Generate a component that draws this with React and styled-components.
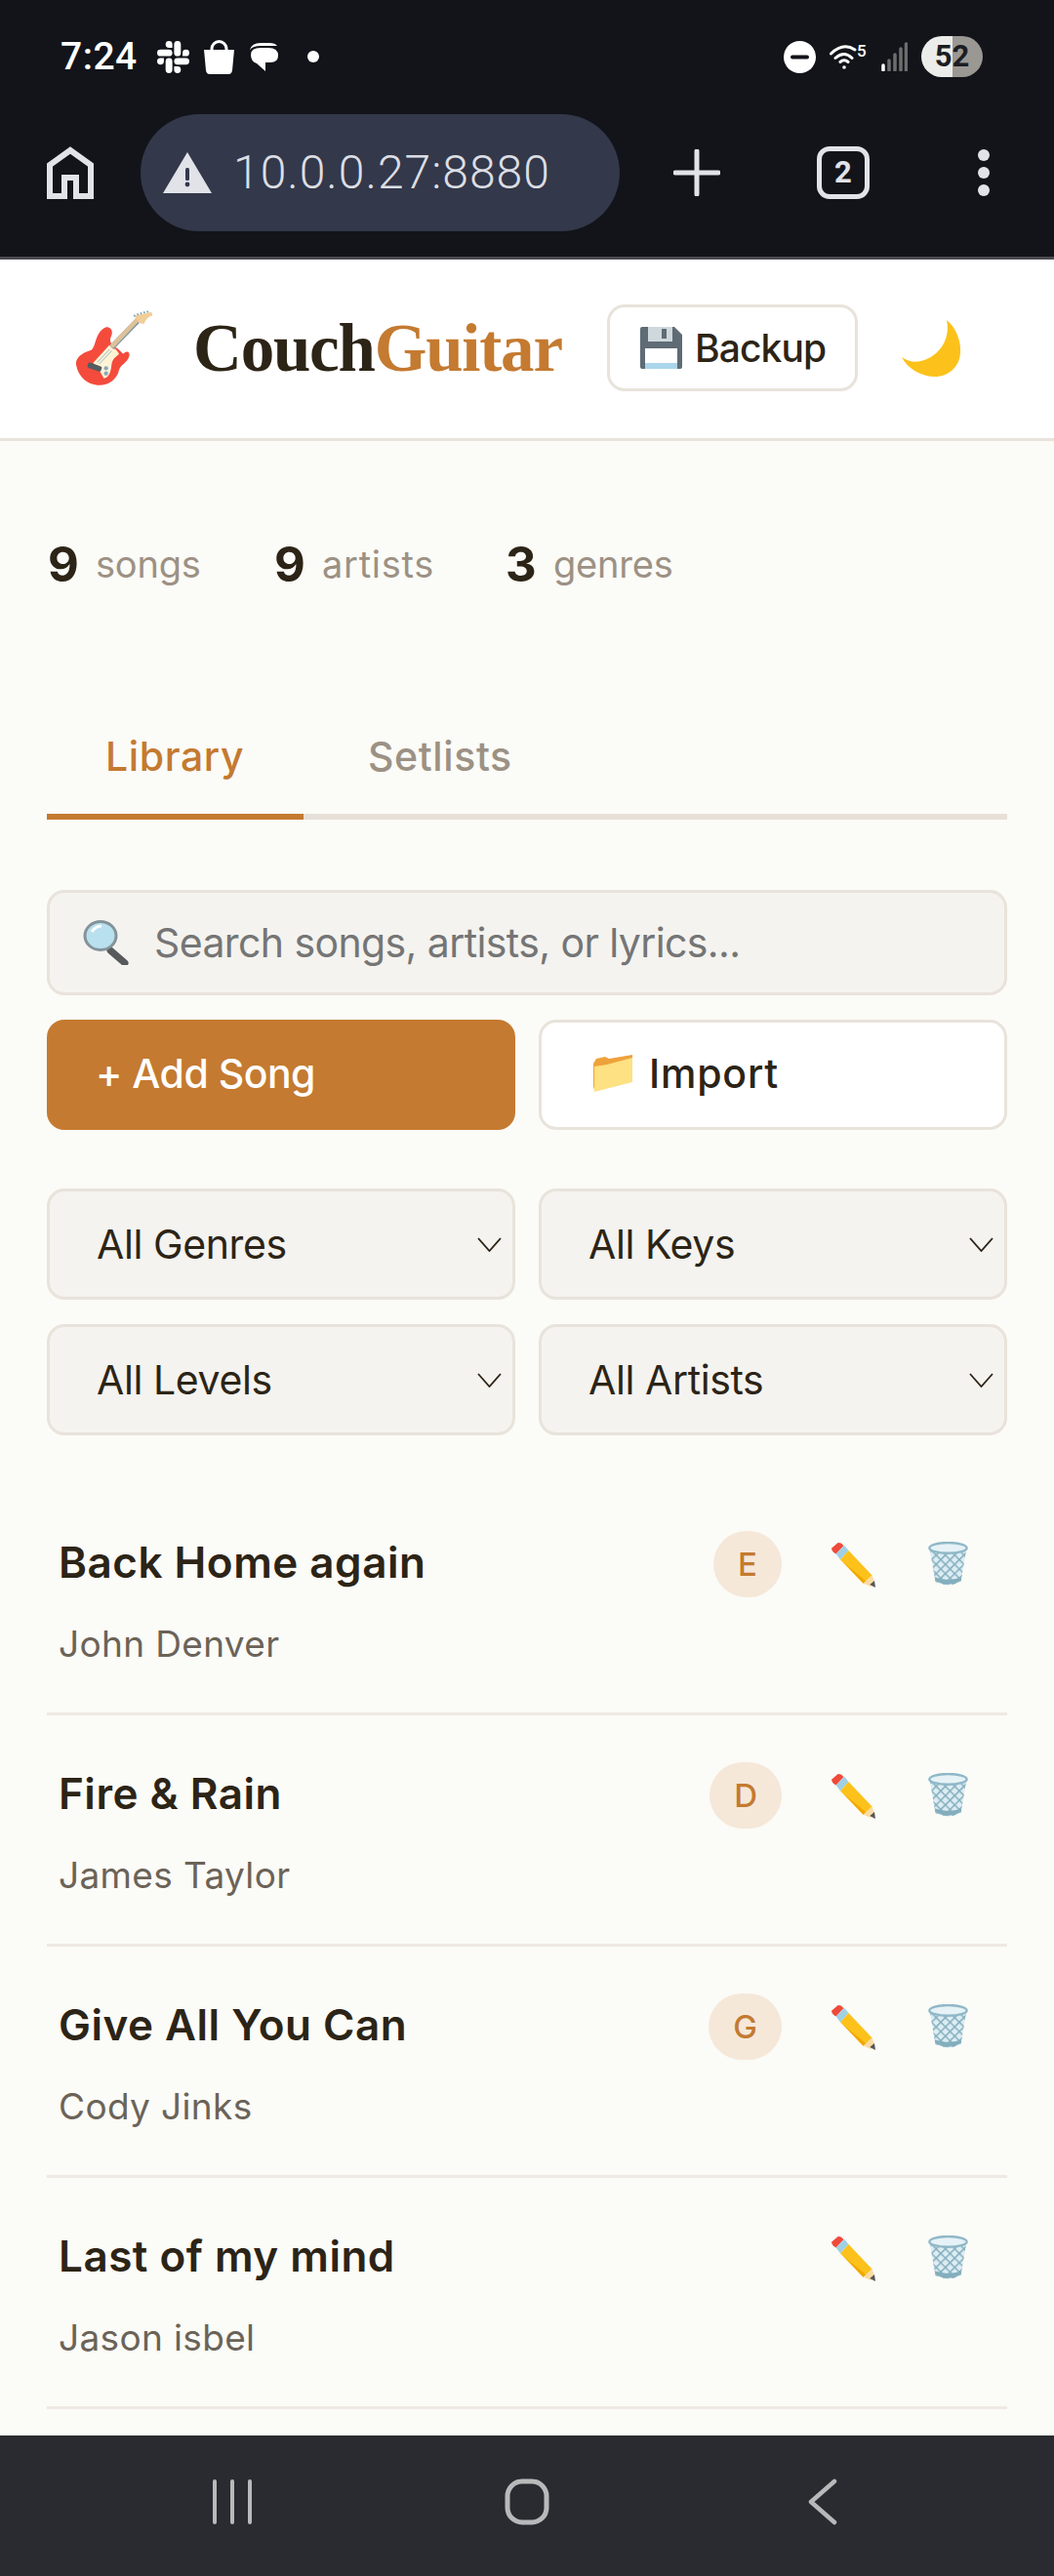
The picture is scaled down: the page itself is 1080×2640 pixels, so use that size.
import React from 'react';
import styled, { createGlobalStyle } from 'styled-components';
import { SiSlack } from 'react-icons/si';

const GlobalStyle = createGlobalStyle`
    * { box-sizing: border-box; }
    html, body { margin: 0; padding: 0; background: #12141a; }
    body { font-family: "Inter", "Liberation Sans", sans-serif; }
`;

const ACCENT = '#c47a30';
const INK = '#2c2416';
const LINE = '#e8e3db';
const MUTED = '#9c9184';

const Frame = styled.div`
    width: 1080px;
    height: 2640px;
    display: flex;
    flex-direction: column;
    overflow: hidden;
    background: #fbfbf7;
`;

/* phone chrome */
const StatusBar = styled.div`
    height: 116px;
    flex: none;
    display: flex;
    align-items: center;
    padding: 0 73px 0 62px;
    background: #12141a;
    color: #fff;
`;

const Clock = styled.span`
    font-family: Roboto, sans-serif;
    font-size: 39px;
    font-weight: 500;
    width: 99px;
    letter-spacing: 0.5px;
`;

const NotifyIcons = styled.div`
    display: flex;
    align-items: center;
    gap: 14px;
`;

const NotifyDot = styled.i`
    width: 12px;
    height: 12px;
    margin-left: 15px;
    border-radius: 50%;
    background: #fff;
`;

const SystemIcons = styled.div`
    margin-left: auto;
    display: flex;
    align-items: center;
    gap: 14px;
`;

const WifiGroup = styled.div`
    display: flex;
    align-items: flex-start;
    height: 28px;
    span {
        width: 11px;
        font-family: Roboto, sans-serif;
        font-size: 17px;
        font-weight: 500;
        line-height: 17px;
    }
`;

const Battery = styled.div`
    width: 63px;
    height: 42px;
    border-radius: 21px;
    background: linear-gradient(90deg, #ececea 0 51%, #9b9893 51% 100%);
    color: #1c1d22;
    font-family: Roboto, sans-serif;
    font-weight: 700;
    font-size: 31px;
    line-height: 42px;
    text-align: center;
`;

const Toolbar = styled.div`
    height: 150px;
    flex: none;
    display: flex;
    align-items: center;
    padding: 0 0 26px 48px;
    background: #12141a;
    border-bottom: 3px solid #4b4b51;
    color: #e1e3e9;
`;

const AddressPill = styled.div`
    width: 491px;
    height: 120px;
    margin-left: 48px;
    padding-left: 23px;
    display: flex;
    align-items: center;
    gap: 22px;
    border-radius: 60px;
    background: #33384a;
`;

const AddressText = styled.span`
    font-family: Roboto, sans-serif;
    font-size: 48px;
    font-weight: 300;
    color: #dcdee4;
    letter-spacing: 1px;
    white-space: nowrap;
`;

const PlusSlot = styled.div`
    margin-left: 55px;
    display: flex;
`;

const TabCount = styled.div`
    width: 54px;
    height: 54px;
    margin-left: 99px;
    border: 5px solid #e1e3e9;
    border-radius: 13px;
    font-family: Roboto, sans-serif;
    font-size: 31px;
    font-weight: 700;
    line-height: 44px;
    text-align: center;
`;

const MenuDots = styled.div`
    margin-left: 111px;
    display: flex;
    flex-direction: column;
    gap: 6px;
    i {
        width: 12px;
        height: 12px;
        border-radius: 50%;
        background: #e1e3e9;
    }
`;

const NavBar = styled.div`
    height: 144px;
    flex: none;
    display: grid;
    grid-template-columns: 218px 40px 259px 46px 265px 30px;
    align-items: center;
    background: #2a2b30;
    padding-bottom: 8px;
    svg:first-child { grid-column: 2; }
    svg:nth-child(2) { grid-column: 4; }
    svg:nth-child(3) { grid-column: 6; }
`;

/* app header */
const Header = styled.header`
    height: 186px;
    flex: none;
    display: flex;
    align-items: center;
    padding: 0 0 2px 77px;
    background: #fff;
    border-bottom: 3px solid ${LINE};
`;

const Logo = styled.h1`
    width: 378px;
    margin: 0 46px 0 41px;
    font-family: "Liberation Serif", serif;
    font-size: 69px;
    font-weight: 700;
    line-height: 80px;
    letter-spacing: -1.2px;
    white-space: nowrap;
    color: ${INK};
    span { color: ${ACCENT}; }
`;

const BackupButton = styled.button`
    width: 257px;
    height: 89px;
    display: flex;
    align-items: center;
    gap: 13px;
    padding: 0 0 0 31px;
    font: 500 39px "Inter", sans-serif;
    letter-spacing: -0.9px;
    color: ${INK};
    background: #fff;
    border: 3px solid ${LINE};
    border-radius: 18px;
`;

const MoonSlot = styled.div`
    margin-left: 45px;
    display: flex;
`;

/* page body */
const Main = styled.main`
    flex: 1;
    min-height: 0;
    padding: 96px 48px 0;
    overflow: hidden;
`;

const Stats = styled.div`
    display: flex;
    height: 60px;
    align-items: center;
`;

const Stat = styled.div`
    display: flex;
    align-items: center;
    width: ${(p) => p.$width}px;
    b {
        width: 50px;
        padding-left: 1px;
        font-size: 49px;
        font-weight: 700;
        color: ${INK};
    }
    span {
        font-size: 38px;
        color: ${MUTED};
        letter-spacing: ${(p) => p.$spacing}px;
    }
`;

const TabBar = styled.div`
    display: flex;
    gap: 6px;
    margin-top: 137px;
    border-bottom: 6px solid #e6e0d8;
`;

const Tab = styled.div`
    margin-bottom: -6px;
    padding: 0 60px 29px;
    width: ${(p) => p.$width}px;
    font-size: 41px;
    font-weight: 500;
    line-height: 60px;
    letter-spacing: 0.6px;
    white-space: nowrap;
    color: ${(p) => (p.$active ? ACCENT : MUTED)};
    border-bottom: 6px solid ${(p) => (p.$active ? ACCENT : 'transparent')};
`;

const SearchBox = styled.label`
    height: 108px;
    margin-top: 72px;
    padding-left: 33px;
    display: flex;
    align-items: center;
    gap: 26px;
    background: #f4f3ef;
    border: 3px solid ${LINE};
    border-radius: 18px;
`;

const SearchInput = styled.input`
    flex: 1;
    min-width: 0;
    border: 0;
    outline: 0;
    padding: 0;
    background: none;
    font: 400 41px "Inter", sans-serif;
    letter-spacing: -0.6px;
    color: ${INK};
    &::placeholder { color: #757575; opacity: 1; }
`;

const ActionRow = styled.div`
    display: grid;
    grid-template-columns: 480px 480px;
    column-gap: 24px;
    margin-top: 25px;
`;

const ActionButton = styled.button`
    height: 113px;
    display: flex;
    align-items: center;
    gap: 17px;
    padding: 0 0 3px ${(p) => (p.$primary ? 50 : 53)}px;
    font: 500 41px "Inter", sans-serif;
    letter-spacing: ${(p) => (p.$primary ? -0.5 : 0.8)}px;
    color: ${(p) => (p.$primary ? '#fff' : INK)};
    background: ${(p) => (p.$primary ? ACCENT : '#fff')};
    border: ${(p) => (p.$primary ? '0' : `3px solid ${LINE}`)};
    border-radius: 18px;
`;

const FilterGrid = styled.div`
    display: grid;
    grid-template-columns: 480px 480px;
    gap: 25px 24px;
    margin-top: 60px;
`;

const FilterSelect = styled.div`
    height: 114px;
    padding: 0 11px 0 48px;
    display: flex;
    align-items: center;
    justify-content: space-between;
    font-size: 41px;
    letter-spacing: -0.4px;
    color: ${INK};
    background: #f4f3ef;
    border: 3px solid ${LINE};
    border-radius: 18px;
`;

const SongList = styled.div`
    margin-top: 50px;
`;

const SongRow = styled.div`
    height: 237px;
    display: flex;
    align-items: flex-start;
    padding: 50px 40px 0 12px;
    border-bottom: 3px solid #eee9e2;
`;

const SongInfo = styled.div`
    flex: 1;
    min-width: 0;
`;

const SongTitle = styled.div`
    font-size: 44px;
    font-weight: 600;
    line-height: 60px;
    letter-spacing: 0.5px;
    color: ${INK};
`;

const SongArtist = styled.div`
    margin-top: 29px;
    font-size: 37px;
    line-height: 50px;
    letter-spacing: 0.35px;
    color: #6b6358;
`;

const RowActions = styled.div`
    height: 60px;
    margin-top: 2px;
    display: flex;
    align-items: center;
`;

const KeyBadge = styled.span`
    height: 68px;
    padding: 0 25px;
    margin-right: 50px;
    border-radius: 34px;
    font-size: 33px;
    font-weight: 500;
    line-height: 68px;
    color: ${ACCENT};
    background: #f5e8d9;
`;

const Spacer = styled.span`
    width: 53px;
`;

/* drawings */
const HomeIcon = () => (
    <svg width="48" height="54" viewBox="0 0 48 54" fill="none" stroke="#e1e3e9" strokeWidth="6">
        <path d="M3 51V19L24 4l21 15v32H30V32H18v19z" />
    </svg>
);

const WarnIcon = () => (
    <svg width="50" height="42" viewBox="0 0 50 42">
        <path d="M25 0l25 42H0z" fill="#e1e3e9" />
        <rect x="23" y="16" width="4" height="13" rx="1.5" fill="#33384a" />
        <circle cx="25" cy="33" r="2.4" fill="#33384a" />
    </svg>
);

const PlusIcon = () => (
    <svg width="48" height="48" viewBox="0 0 48 48" stroke="#e1e3e9" strokeWidth="5" strokeLinecap="round">
        <path d="M24 2v44M2 24h44" />
    </svg>
);

const BagIcon = () => (
    <svg width="33" height="35" viewBox="0 0 33 35">
        <path d="M9 11V9a7.5 7.5 0 0 1 15 0v2" fill="none" stroke="#fff" strokeWidth="3" />
        <path d="M1 10h31l-2 21q-.4 4-4 4H7q-3.600 0-4-4z" fill="#fff" />
    </svg>
);

const ChatIcon = () => (
    <svg width="31" height="31" viewBox="0 0 31 31">
        <path d="M1 8Q3 1 12 1h9q6 0 8 3H12Q4 4 1 8z" fill="#fff" />
        <path d="M2 13q0-7 10-7h8q10 0 10 8 0 7-8 7h-5v9l-9-8Q2 20 2 13z" fill="#fff" />
    </svg>
);

const DndIcon = () => (
    <svg width="33" height="33" viewBox="0 0 33 33">
        <circle cx="16.500" cy="16.500" r="16.500" fill="#fff" />
        <rect x="7" y="14.500" width="19" height="4" rx="2" fill="#12141a" />
    </svg>
);

const WifiIcon = () => (
    <svg width="28" height="28" viewBox="0 0 28 28" fill="none" stroke="#fff" strokeWidth="3" strokeLinecap="round">
        <path d="M1.500 11Q14-1 26 7M6 15.500q9-8 17 0M11 19.500q4-3.500 8 0" />
        <circle cx="15" cy="25" r="1.800" fill="#fff" stroke="none" />
    </svg>
);

const SignalIcon = () => (
    <svg width="27" height="30" viewBox="0 0 27 30" strokeWidth="3.500" strokeLinecap="round" fill="none">
        <path d="M2 29v-5" stroke="#fff" />
        <path d="M8 29V19M14 29V13M20 29V7M25.500 29V2" stroke="#6d6d6d" />
    </svg>
);

const GuitarEmoji = () => (
    <svg width="80" height="80" viewBox="110 75 240 240">
        <path d="M205 130c17-2 23 15 15 30-6 12 2 30 20 35l18 17c10-12 22-7 18 8-6 20-26 25-31 42-7 33-40 50-67 46-28-3-58-23-65-63-3-20 17-37 47-45 15-10 10-55 45-70z" fill="#f44b3c" />
        <path d="M165 240l50-55c10 5 25 15 30 27-10 10-20 13-23 33-2 20-7 40-24 42-8-17-23-37-33-47z" fill="#fff3d6" />
        <path d="M222 192l90-92" stroke="#78909c" strokeWidth="17" />
        <path d="M222 190l88-92" stroke="#dcc29a" strokeWidth="14" />
        <path d="M292 95l53-12 3 11c-13 5-20 10-26 26l-16-3z" fill="#f1cd98" />
        <path d="M291 92l3 5M301 88l3 5M311 85l3 5M321 82l3 5M331 80l3 5" stroke="#7ea3b5" strokeWidth="5" />
        <path d="M178 238l38-40M184 243l38-40" stroke="#9fb7c4" strokeWidth="3" />
        <rect x="148" y="244" width="44" height="17" rx="5" transform="rotate(20 170 252)" fill="#555c60" />
        <circle cx="205" cy="256" r="6.500" fill="#86a9bd" />
        <circle cx="205" cy="272" r="6.500" fill="#86a9bd" />
    </svg>
);

const FloppyEmoji = () => (
    <svg width="43" height="43" viewBox="0 0 43 43">
        <path d="M2 0h33l8 8v33a2 2 0 0 1-2 2H2a2 2 0 0 1-2-2V2a2 2 0 0 1 2-2z" fill="#5f6b75" />
        <rect x="8" y="0" width="25" height="15" fill="#cfd8dc" />
        <rect x="22" y="2" width="5" height="10" fill="#5f6b75" />
        <rect x="5" y="22" width="33" height="21" fill="#fff" />
        <rect x="5" y="37" width="33" height="6" fill="#a9d6ea" />
    </svg>
);

const MoonEmoji = () => (
    <svg width="60" height="58" viewBox="0 0 60 58">
        <path d="M46 0c10 8 15 22 14 34-1 14-12 24-26 24C20 58 6 50 0 38c7 5 15 6 23 3C40 35 50 18 46 0z" fill="#fcc21b" />
    </svg>
);

const SearchEmoji = () => (
    <svg width="48" height="46" viewBox="0 0 48 46">
        <path d="M29 31l15 13" stroke="#58595b" strokeWidth="7" strokeLinecap="round" />
        <ellipse cx="19" cy="16" rx="16" ry="14.500" fill="#b9e0ee" stroke="#84939a" strokeWidth="3" />
        <path d="M10 12q4-6 10-6" stroke="#fff" strokeWidth="3" fill="none" />
    </svg>
);

const FolderEmoji = () => (
    <svg width="40" height="38" viewBox="0 0 40 38">
        <path d="M0 36V9l3-5 9-2 4 2 24-4v6L6 14z" fill="#eea23c" />
        <path d="M1 38l39-10V3L14 10 1 12z" fill="#fde183" />
    </svg>
);

const PencilEmoji = () => (
    <svg width="47" height="47" viewBox="505 115 140 140">
        <path d="M508 135l20-17q12 0 17 10l-23 24q-12-4-14-17z" fill="#ef4a3a" />
        <path d="M522 152l25-26 13 16-25 28z" fill="#9fd0e4" />
        <path d="M535 170l25-28 72 76-27 24z" fill="#fcc21b" />
        <path d="M545 179l15 16 45 47 8-7z" fill="#f2a600" />
        <path d="M605 242l27-24 8 22-12 12z" fill="#fbdba4" />
        <path d="M625 246l14-12 3 21z" fill="#555" />
    </svg>
);

const TrashEmoji = () => (
    <svg width="41" height="46" viewBox="810 118 122 137">
        <defs>
            <pattern id="mesh" width="20" height="20" patternUnits="userSpaceOnUse" patternTransform="rotate(45)">
                <rect width="20" height="20" fill="#dcedf3" />
                <path d="M0 0h20M0 0v20" stroke="#84aebd" strokeWidth="9" />
            </pattern>
        </defs>
        <path d="M815 140l17 100q38 20 78 0l17-100z" fill="url(#mesh)" />
        <path d="M832 238q38 20 78 0l2-12q-40 16-82 0z" fill="#84aebd" />
        <ellipse cx="871" cy="137" rx="57" ry="16" fill="#e6f2f6" stroke="#8fb8c8" strokeWidth="7" />
    </svg>
);

const Chevron = () => (
    <svg width="25" height="15" viewBox="0 0 25 15" fill="none" stroke={INK} strokeWidth="1.800">
        <path d="M1 1l11.500 13L24 1" />
    </svg>
);

const SONGS = [
    { title: 'Back Home again', artist: 'John Denver', songKey: 'E' },
    { title: 'Fire & Rain', artist: 'James Taylor', songKey: 'D' },
    { title: 'Give All You Can', artist: 'Cody Jinks', songKey: 'G' },
    { title: 'Last of my mind', artist: 'Jason isbel' },
];

const FILTERS = ['All Genres', 'All Keys', 'All Levels', 'All Artists'];

const App = () => {
    return (
        <Frame>
            <GlobalStyle />
            <StatusBar>
                <Clock>7:24</Clock>
                <NotifyIcons>
                    <SiSlack size={33} color="#fff" />
                    <BagIcon />
                    <ChatIcon />
                    <NotifyDot />
                </NotifyIcons>
                <SystemIcons>
                    <DndIcon />
                    <WifiGroup><WifiIcon /><span>5</span></WifiGroup>
                    <SignalIcon />
                    <Battery>52</Battery>
                </SystemIcons>
            </StatusBar>
            <Toolbar>
                <HomeIcon />
                <AddressPill>
                    <WarnIcon />
                    <AddressText>10.0.0.27:8880</AddressText>
                </AddressPill>
                <PlusSlot><PlusIcon /></PlusSlot>
                <TabCount>2</TabCount>
                <MenuDots><i /><i /><i /></MenuDots>
            </Toolbar>
            <Header>
                <GuitarEmoji />
                <Logo>Couch<span>Guitar</span></Logo>
                <BackupButton><FloppyEmoji />Backup</BackupButton>
                <MoonSlot><MoonEmoji /></MoonSlot>
            </Header>
            <Main>
                <Stats>
                    <Stat $width={232} $spacing={-0.2}><b>9</b><span>songs</span></Stat>
                    <Stat $width={237} $spacing={0.7}><b>9</b><span>artists</span></Stat>
                    <Stat $width={200} $spacing={-0.2}><b>3</b><span>genres</span></Stat>
                </Stats>
                <TabBar>
                    <Tab $active $width={263}>Library</Tab>
                    <Tab>Setlists</Tab>
                </TabBar>
                <SearchBox>
                    <SearchEmoji />
                    <SearchInput readOnly placeholder="Search songs, artists, or lyrics..." />
                </SearchBox>
                <ActionRow>
                    <ActionButton $primary>+ Add Song</ActionButton>
                    <ActionButton><FolderEmoji />Import</ActionButton>
                </ActionRow>
                <FilterGrid>
                    {FILTERS.map((name) => (
                        <FilterSelect key={name}>{name}<Chevron /></FilterSelect>
                    ))}
                </FilterGrid>
                <SongList>
                    {SONGS.map((song) => (
                        <SongRow key={song.title}>
                            <SongInfo>
                                <SongTitle>{song.title}</SongTitle>
                                <SongArtist>{song.artist}</SongArtist>
                            </SongInfo>
                            <RowActions>
                                {song.songKey && <KeyBadge>{song.songKey}</KeyBadge>}
                                <PencilEmoji />
                                <Spacer />
                                <TrashEmoji />
                            </RowActions>
                        </SongRow>
                    ))}
                </SongList>
            </Main>
            <NavBar>
                <svg width="40" height="46" viewBox="0 0 40 46" stroke="#b9b9bb" strokeWidth="4" strokeLinecap="round">
                    <path d="M2 2v42M20 2v42M38 2v42" />
                </svg>
                <svg width="46" height="48" viewBox="0 0 46 48" fill="none" stroke="#b9b9bb" strokeWidth="5">
                    <rect x="3" y="3" width="40" height="42" rx="15" />
                </svg>
                <svg width="30" height="48" viewBox="0 0 30 48" fill="none" stroke="#b9b9bb" strokeWidth="4.500" strokeLinecap="round" strokeLinejoin="round">
                    <path d="M27 3L3 24l24 21" />
                </svg>
            </NavBar>
        </Frame>
    );
};

export default App;
